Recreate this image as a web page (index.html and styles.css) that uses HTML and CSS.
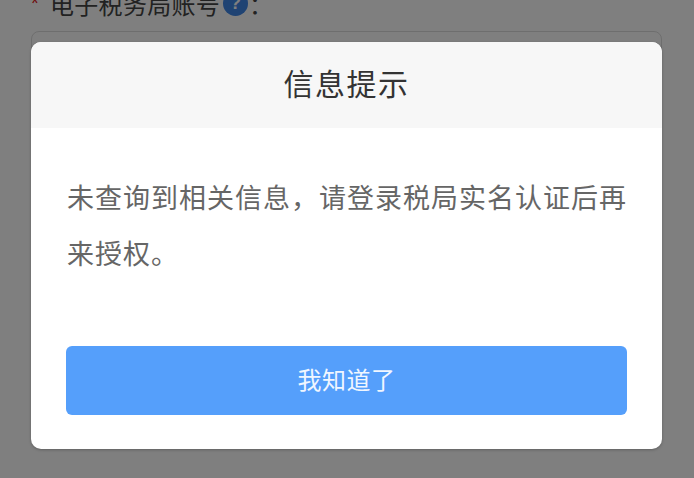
FILE: index.html
```html
<!DOCTYPE html>
<html lang="zh-CN">
<head>
  <meta charset="utf-8">
  <title>信息提示</title>
  <link rel="stylesheet" href="styles.css">
</head>
<body>
  <div class="form-group">
    <div class="form-label">
      <span class="required">*</span>
      <span class="label-text">电子税务局账号</span>
      <span class="help-icon">?</span>
      <span class="colon">：</span>
    </div>
    <div class="form-input"></div>
  </div>

  <div class="mask">
    <div class="dialog">
      <div class="dialog-header">信息提示</div>
      <div class="dialog-body">未查询到相关信息，请登录税局实名认证后再来授权。</div>
      <div class="dialog-footer">
        <button class="confirm-button">我知道了</button>
      </div>
    </div>
  </div>
</body>
</html>
```

FILE: styles.css
```css
html, body {
  height: 100%;
}
body {
  margin: 0;
  overflow: hidden;
  background-color: #fff;
  font-family: "Liberation Sans", "Noto Sans CJK SC", sans-serif;
  color: #333;
}
.form-group {
  margin-top: -13px;
  padding: 0 32px 0 31px;
}
.form-label {
  display: flex;
  align-items: center;
  height: 32px;
  font-size: 24px;
  color: #444;
}
.required {
  width: 19px;
  color: #e02020;
  font-size: 20px;
}
.label-text {
  letter-spacing: 0.3px;
}
.help-icon {
  width: 25px;
  height: 25px;
  margin-left: 3px;
  border-radius: 50%;
  background-color: #3f86e6;
  color: #fff;
  font-size: 18px;
  font-weight: bold;
  line-height: 25px;
  text-align: center;
}
.colon {
  margin-left: 1px;
}
.form-input {
  height: 80px;
  margin-top: 12px;
  border: 1px solid #ddd;
  border-radius: 8px;
}
.mask {
  position: absolute;
  top: 0;
  left: 0;
  right: 0;
  bottom: 0;
  background-color: rgba(0, 0, 0, 0.5);
  padding: 42px 32px 0 31px;
}
.dialog {
  height: 407px;
  background-color: #fff;
  border-radius: 10px;
  overflow: hidden;
  box-shadow: 0 1px 3px rgba(0, 0, 0, 0.25);
}
.dialog-header {
  height: 86px;
  background-color: #f7f7f7;
  font-size: 30px;
  letter-spacing: 1.5px;
  line-height: 85px;
  text-align: center;
  color: #333;
}
.dialog-body {
  height: 218px;
  padding: 43px 35px 0 36px;
  box-sizing: border-box;
  font-size: 27px;
  letter-spacing: 1px;
  line-height: 56px;
  color: #666;
}
.dialog-footer {
  padding: 0 35px;
}
.confirm-button {
  display: block;
  width: 100%;
  height: 69px;
  padding: 0 0 4px;
  background-color: #559ffb;
  color: #f0f6ff;
  border: none;
  border-radius: 6px;
  font-family: inherit;
  font-size: 24px;
  letter-spacing: 0.5px;
  cursor: pointer;
}
```
